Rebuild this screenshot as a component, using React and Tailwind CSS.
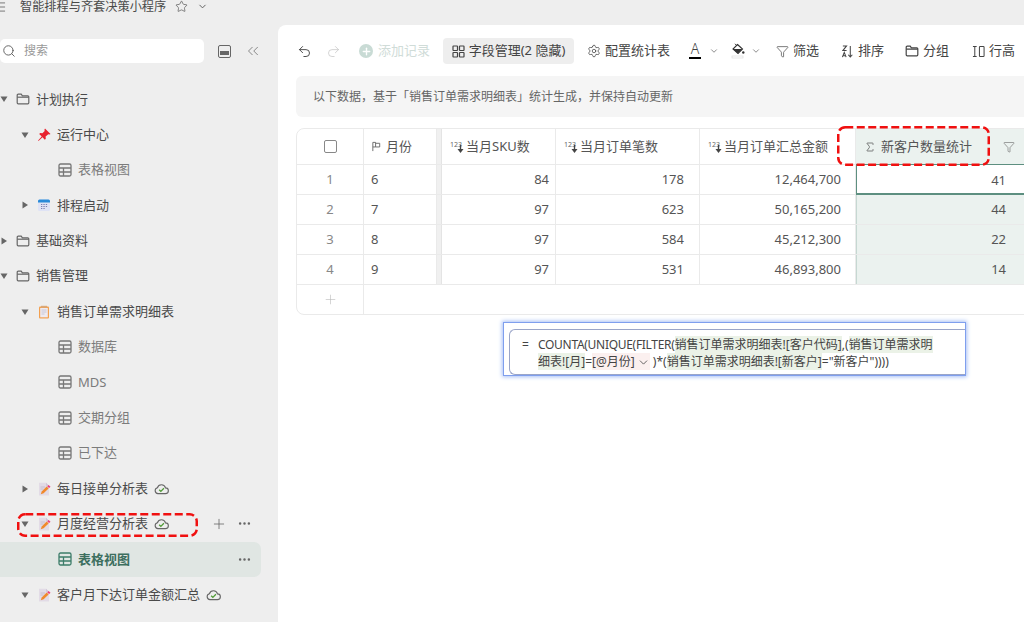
import React from "react";
import { Undo2, Redo2, Settings, Sigma, Plus, Ellipsis, ChevronDown, Star, Search, ChevronsLeft, Filter, Menu } from "lucide-react";

const Folder = ({ className = "" }) => (
  <svg viewBox="0 0 14 14" width="14" height="14" fill="none" stroke="currentColor" strokeWidth="1.2" className={className}>
    <path d="M1.2 3.2a1 1 0 0 1 1-1h3l1.2 1.6h5.4a1 1 0 0 1 1 1v6a1 1 0 0 1-1 1H2.2a1 1 0 0 1-1-1z" />
    <path d="M1.2 5.2h11.6" />
  </svg>
);
const TableIcon = ({ className = "" }) => (
  <svg viewBox="0 0 14 14" width="14" height="14" fill="none" stroke="currentColor" strokeWidth="1.3" className={className}>
    <rect x="1" y="1" width="12" height="12" rx="1.5" />
    <path d="M1 5h12M1 9h12M5.5 5v8" />
  </svg>
);
const Pin = () => (
  <svg viewBox="0 0 14 14" width="14" height="14">
    <path d="M8 .5l5.500 5.500-1.200.6-1-.4L8.600 8.600l.2 2.200-1 1L5.500 9.300 1.500 13l-.4-.4L4.700 8.500 2.200 6l1-1 2.200.2 2.300-2.300-.3-1.200z" fill="#e8212e" />
  </svg>
);
const Calendar = () => (
  <svg viewBox="0 0 14 14" width="14" height="14">
    <rect x="1" y="1.500" width="12" height="11.500" rx="1.500" fill="#dfe3f5" />
    <path d="M1 4.500V3a1.500 1.500 0 0 1 1.500-1.500h9A1.500 1.500 0 0 1 13 3v1.500z" fill="#2a8bd8" />
    <path d="M4 6.500h1.300M6.400 6.500h1.300M8.800 6.500h1.300M4 8.500h1.300M6.400 8.500h1.300M8.800 8.500h1.300M4 10.500h1.300M6.400 10.500h1.300" stroke="#7a7fb0" strokeWidth="1" />
  </svg>
);
const Clip = () => (
  <svg viewBox="0 0 14 14" width="14" height="14">
    <rect x="2" y="1.500" width="10" height="12" rx="1" fill="#f3a050" />
    <rect x="3.200" y="3" width="7.600" height="9.300" fill="#eeeaf0" />
    <path d="M4.500 5h5M4.500 7h5M4.500 9h3" stroke="#c4c4d2" strokeWidth="0.900" />
    <rect x="4" y="0.800" width="6" height="1.800" fill="#d9a878" />
  </svg>
);
const DocPen = () => (
  <svg viewBox="0 0 14 14" width="14" height="14">
    <path d="M2 .8h7l3 3V13.500H2z" fill="#e2dbe6" />
    <path d="M9 .8v3h3z" fill="#cfc6d6" />
    <path d="M3.500 5h4.500M3.500 7h3" stroke="#c4bccd" strokeWidth="0.900" />
    <path d="M3.800 12.200l.9-2.800 5-4.800 1.900 1.900-5 4.800z" fill="#f08a2c" />
    <path d="M10.200 4.200l1.900 1.900 1.400-1.300-1.900-1.900z" fill="#ec3f7c" />
  </svg>
);
const CloudCheck = () => (
  <svg viewBox="0 0 16 14" width="15" height="13" fill="none" className="ml-[6px] shrink-0">
    <path d="M4.200 12.500a3.200 3.200 0 0 1-.6-6.300 4.500 4.500 0 0 1 8.700.1 3.100 3.100 0 0 1 0 6.200z" stroke="#666" strokeWidth="1.200" />
    <path d="M5.500 8.300l1.800 1.800 3.300-3.300" stroke="#4f9a35" strokeWidth="1.400" />
  </svg>
);
const Caret = ({ open }) => (
  <svg viewBox="0 0 8 8" width="8" height="8" className="shrink-0" fill="#666">
    {open ? <path d="M.5 1.500h7L4 7z" /> : <path d="M1.500.5v7L7 4z" />}
  </svg>
);
const Num = () => (
  <span className="relative inline-block w-[14px] h-[13px] text-[7px] leading-[9px] text-[#666] shrink-0">
    123
    <svg viewBox="0 0 6 7" width="7" height="8" className="absolute left-[7px] top-[5px]"><path d="M3 0v5" stroke="#444" strokeWidth="1.200" fill="none" /><path d="M.4 3.500h5.200L3 7z" fill="#444" /></svg>
  </span>
);
const Bucket = () => (
  <svg viewBox="0 0 14 16" width="14" height="16" className="ml-[12px] shrink-0">
    <path d="M6.500 1.500l5 4.500-4.500 4.500-5-4.500z" fill="none" stroke="#333" strokeWidth="1.100" />
    <path d="M1.800 6h9.400L7 10.600z" fill="#333" />
    <path d="M4 .8l2 2" stroke="#333" strokeWidth="1" />
    <circle cx="12.300" cy="9.500" r="1.200" fill="#333" />
    <rect x="1" y="13" width="11" height="2" fill="#fff" stroke="#ddd" strokeWidth="0.700" />
  </svg>
);

const Row = ({ indent, caret, icon, children, muted, bold, className = "", right }) => (
  <div className={`h-[35.4px] flex items-center relative ${className}`} style={{ paddingLeft: indent }}>
    {caret !== undefined && <span className="w-[16px] flex shrink-0"><Caret open={caret} /></span>}
    <span className="w-[14px] h-[14px] flex shrink-0 mr-[6px]">{icon}</span>
    <span className={`text-[13px] whitespace-nowrap ${bold ? "font-bold text-[#3d6f5f]" : muted ? "text-[#7b7b7b]" : "text-[#4a4a4a]"}`}>{children}</span>
    {right}
  </div>
);

const Tool = ({ icon, children }) => (
  <div className="flex items-center gap-[4px] text-[13px] text-[#444] whitespace-nowrap">{icon}{children}</div>
);

const Dash = ({ className, w, h }) => (
  <svg width={w} height={h} viewBox={`0 0 ${w} ${h}`} fill="none" className={`absolute ${className}`}>
    <rect x="1.250" y="1.250" width={w - 2.5} height={h - 2.5} rx="7" stroke="#f01010" strokeWidth="2.500" strokeDasharray="8 3.500" />
  </svg>
);

const COLS = "grid grid-cols-[67px_73px_5px_114px_144px_156px_1fr]";
const rows = [
  ["1", "6", "84", "178", "12,464,700", "41"],
  ["2", "7", "97", "623", "50,165,200", "44"],
  ["3", "8", "97", "584", "45,212,300", "22"],
  ["4", "9", "97", "531", "46,893,800", "14"],
];
const cell = "border-r border-[#eaeaea] flex items-center";

const Hl = ({ children, c = "bg-[#ebf2e7]" }) => <span className={c}>{children}</span>;

export default function App() {
  return (
    <div className="w-[1024px] h-[622px] overflow-hidden bg-[#eeeeee] flex flex-col relative" style={{ fontFamily: '"Noto Sans","Noto Sans CJK SC",sans-serif' }}>
      <div className="h-[25px] shrink-0 flex items-start text-[#555]">
        <Menu size={14} className="ml-[-7px]" strokeWidth={1.300} />
        <span className="ml-[13px] text-[12.200px] leading-[14px] text-[#4a4a4a] whitespace-nowrap">智能排程与齐套决策小程序</span>
        <Star size={13} className="ml-[9px]" strokeWidth={1.300} />
        <ChevronDown size={11} className="ml-[9px] mt-[1px]" />
      </div>
      <div className="flex flex-1 min-h-0">
        <aside className="w-[278px] shrink-0 flex flex-col">
          <div className="flex items-center h-[24px] mt-[14px] mb-[18.600px]">
            <div className="w-[204px] h-[24px] bg-white rounded-[5px] flex items-center pl-[2px] gap-[8px] text-[12px] text-[#999]">
              <Search size={14} className="text-[#555]" strokeWidth={1.500} />搜索
            </div>
            <span className="ml-[14px] w-[13px] h-[13px] border border-[#666] rounded-[2px] flex items-end justify-center pb-[2px]"><span className="w-[9px] h-[4px] bg-[#666]" /></span>
            <ChevronsLeft size={18} strokeWidth={1} className="ml-[13px] text-[#666]" />
          </div>
          <Row indent={-1} caret={true} icon={<Folder className="text-[#666]" />} >计划执行</Row>
          <Row indent={21} caret={true} icon={<Pin />} >运行中心</Row>
          <Row indent={58} muted icon={<TableIcon className="text-[#777]" />} >表格视图</Row>
          <Row indent={21} caret={false} icon={<Calendar />} >排程启动</Row>
          <Row indent={-1} caret={false} icon={<Folder className="text-[#666]" />} >基础资料</Row>
          <Row indent={-1} caret={true} icon={<Folder className="text-[#666]" />} >销售管理</Row>
          <Row indent={21} caret={true} icon={<Clip />} >销售订单需求明细表</Row>
          <Row indent={58} muted icon={<TableIcon className="text-[#777]" />} >数据库</Row>
          <Row indent={58} muted icon={<TableIcon className="text-[#777]" />} >MDS</Row>
          <Row indent={58} muted icon={<TableIcon className="text-[#777]" />} >交期分组</Row>
          <Row indent={58} muted icon={<TableIcon className="text-[#777]" />} >已下达</Row>
          <Row indent={21} caret={false} icon={<DocPen />} right={<CloudCheck />}>每日接单分析表</Row>
          <Row indent={21} caret={true} icon={<DocPen />} right={
            <>
              <CloudCheck />
              <Plus size={16} strokeWidth={1.200} className="absolute left-[211px] text-[#666]" />
              <Ellipsis size={15} className="absolute left-[237px] text-[#666]" />
            </>
          }>月度经营分析表</Row>
          <Row indent={58} bold className="bg-[#e0e6e3] rounded-r-[7px] w-[261px]" icon={<TableIcon className="text-[#3d7d6a]" />} right={<Ellipsis size={15} className="absolute left-[237px] text-[#666]" />}>表格视图</Row>
          <Row indent={21} caret={true} icon={<DocPen />} right={<CloudCheck />}>客户月下达订单金额汇总</Row>
        </aside>
        <main className="flex-1 min-w-0 bg-white rounded-tl-[8px] pl-[18px] overflow-hidden">
          <div className="h-[26px] mt-[13px] flex items-center text-[#444] whitespace-nowrap">
            <Undo2 size={15} strokeWidth={1.500} className="ml-[1px]" />
            <Redo2 size={15} strokeWidth={1.200} className="ml-[14px] text-[#c5c5c5]" />
            <span className="ml-[18px] w-[14px] h-[14px] rounded-full bg-[#c9dbd5] text-white flex items-center justify-center"><Plus size={11} strokeWidth={3} /></span>
            <span className="ml-[5px] text-[13px] text-[#d0dcd8]">添加记录</span>
            <div className="ml-[13px] w-[131px] h-[26px] rounded-[4px] bg-[#eeeeee] flex items-center justify-center gap-[4px] text-[13px] text-[#444]">
              <svg viewBox="0 0 13 13" width="13" height="13" fill="none" stroke="#444" strokeWidth="1.200"><rect x="1" y="1" width="4.500" height="4.500" rx=".5" /><rect x="7.500" y="1" width="4.500" height="4.500" rx=".5" /><rect x="1" y="7.500" width="4.500" height="4.500" rx=".5" /><rect x="7.500" y="7.500" width="4.500" height="4.500" rx=".5" /></svg>
              字段管理(2 隐藏)
            </div>
            <div className="ml-[13px]"><Tool icon={<Settings size={14} strokeWidth={1.300} />}>配置统计表</Tool></div>
            <div className="ml-[18px] w-[14px] h-[16px] flex flex-col items-center text-[14px] leading-[12px] font-light text-[#444]">A<span className="w-[12px] h-[2px] bg-black mt-[2px]" /></div>
            <ChevronDown size={10} className="ml-[7px] text-[#777]" />
            <Bucket />
            <ChevronDown size={10} className="ml-[6px] text-[#777]" />
            <div className="ml-[15px]"><Tool icon={<Filter size={13} strokeWidth={1.300} />}>筛选</Tool></div>
            <div className="ml-[22px]"><Tool icon={
              <svg viewBox="0 0 14 14" width="13" height="13" fill="none" stroke="#444" strokeWidth="1.100"><path d="M2 1h4L2 6h4M1.500 13l2-5 2 5M2.300 11.500h2.500M10 1v12M7.800 10.500L10 13l2.200-2.500" /></svg>
            }>排序</Tool></div>
            <div className="ml-[21px]"><Tool icon={<Folder className="text-[#444]" />}>分组</Tool></div>
            <div className="ml-[23px]"><Tool icon={
              <svg viewBox="0 0 14 14" width="13" height="13" fill="none" stroke="#444" strokeWidth="1.100"><path d="M1 1.500h4M1 12.500h4M3 1.500v11" /><rect x="8" y="1.500" width="5" height="11" rx=".8" /></svg>
            }>行高</Tool></div>
          </div>
          <div className="h-[41px] mt-[12px] bg-[#f5f5f5] rounded-l-[6px] flex items-center pl-[17px] text-[12px] text-[#666] whitespace-nowrap">
            以下数据，基于「销售订单需求明细表」统计生成，并保持自动更新
          </div>
          <div className="mt-[11px] w-[800px] border border-[#eaeaea] rounded-l-[8px] text-[13px] text-[#555] overflow-hidden">
            <div className={`${COLS} h-[36px] border-b border-[#eaeaea]`}>
              <div className={`${cell} justify-center`}><span className="w-[13px] h-[13px] border border-[#888] rounded-[2px]" /></div>
              <div className={`${cell} pl-[7px] gap-[4px]`}>
                <svg viewBox="0 0 12 12" width="11" height="11" fill="none" stroke="#666" strokeWidth="1"><path d="M2 11V1.500h3v5H2M5 2.500h4.500v4H5" /></svg>月份
              </div>
              <div className="bg-[#f0f0f0] border-r border-[#e4e4e4]" />
              <div className={`${cell} pl-[8px] gap-[2px]`}><Num />当月SKU数</div>
              <div className={`${cell} pl-[8px] gap-[2px]`}><Num />当月订单笔数</div>
              <div className={`${cell} pl-[8px] gap-[2px]`}><Num />当月订单汇总金额</div>
              <div className="bg-[#ebf2ef] flex items-center pl-[8px] gap-[5px]">
                <Sigma size={12} strokeWidth={1.500} />新客户数量统计
                <Filter size={12} strokeWidth={1.200} className="ml-[26px] text-[#666]" />
              </div>
            </div>
            {rows.map((r, i) => (
              <div key={r[0]} className={`${COLS} h-[30px] border-b border-[#eaeaea]`}>
                <div className={`${cell} justify-center text-[#888] pt-[1px]`}>{r[0]}</div>
                <div className={`${cell} pl-[7px] pt-[1px]`}>{r[1]}</div>
                <div className="bg-[#f0f0f0] border-r border-[#e4e4e4]" />
                <div className={`${cell} justify-end pr-[6px] pt-[1px]`}>{r[2]}</div>
                <div className={`${cell} justify-end pr-[15px] pt-[1px]`}>{r[3]}</div>
                <div className={`${cell} justify-end pr-[14px] pt-[1px]`}>{r[4]}</div>
                <div className={`flex items-center justify-end w-[169px] pr-[19px] ${i === 0 ? "bg-white border-l border-t border-b-2 border-[#5d8f80] -mt-px -mb-px pt-[3px]" : "bg-[#ebf2ef] border-l border-[#c6d8d2] pt-[1px]"}`}>
                  {r[5]}
                </div>
              </div>
            ))}
            <div className={`${COLS} h-[29px]`}>
              <div className={`${cell} justify-center`}><Plus size={15} strokeWidth={1} className="text-[#bbb]" /></div>
            </div>
          </div>
        </main>
      </div>

      <div className="absolute left-[503px] top-[322px] w-[463px] h-[54px] bg-white border border-[#7f9fee] shadow-[0_0_4px_1px_#a8c0f5] pl-[5px] pt-[6px]">
        <div className="h-[46px] border border-r-0 border-[#9aa5c8] rounded-l-[6px] flex pl-[12px] pt-[6px] text-[12px] leading-[17px] text-[#444]">
          <span className="w-[16px] shrink-0">=</span>
          <div className="w-[402px]">
            <span className="tracking-[-0.300px]">COUNTA(UNIQUE(FILTER(</span><Hl>销售订单需求明细表![客户代码]</Hl>,(<Hl>销售订单需求明细表![月]</Hl>=<Hl c="bg-[#fbf0ef]">[@月份]<ChevronDown size={13} strokeWidth={1.500} className="inline ml-[2px]" /></Hl> )*(<Hl>销售订单需求明细表![新客户]</Hl>="新客户"))))
          </div>
        </div>
      </div>

      <Dash className="left-[837px] top-[126px]" w={153} h={40} />
      <Dash className="left-[17px] top-[513px]" w={181} h={24} />
    </div>
  );
}
